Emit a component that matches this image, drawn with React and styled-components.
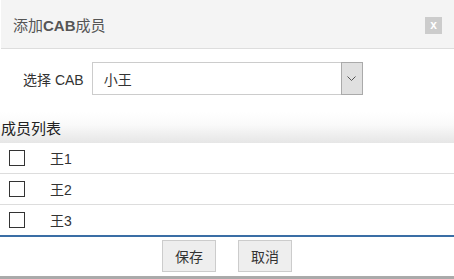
import React, { useState } from 'react';
import styled, { createGlobalStyle } from 'styled-components';

const GlobalStyle = createGlobalStyle`
  html, body {
    margin: 0;
    padding: 0;
    background: #fff;
    font-family: "Liberation Sans", Arial, "Noto Sans CJK SC", sans-serif;
  }
`;

const Dialog = styled.div`
  width: 454px;
  height: 279px;
  box-sizing: border-box;
  border-bottom: 3px solid #aaa;
  background: #fff;
  display: flex;
  flex-direction: column;
`;

const Header = styled.div`
  height: 48px;
  margin-left: 1px;
  background: #f4f4f4;
  border-bottom: 1px solid #ddd;
  display: flex;
  align-items: center;
  justify-content: space-between;
  padding: 0 12px 0 12px;
`;

const Title = styled.div`
  font-size: 15px;
  color: #555;
  b {
    font-weight: bold;
  }
`;

const CloseButton = styled.button`
  width: 17px;
  height: 17px;
  border: none;
  padding: 0;
  background: #ccc;
  color: #fff;
  font-size: 12px;
  line-height: 17px;
  font-family: "Liberation Sans", Arial, sans-serif;
  font-weight: bold;
  margin-top: 3px;
  cursor: pointer;
`;

const FieldRow = styled.div`
  display: flex;
  align-items: center;
  padding: 13px 0 0 23px;
  gap: 8px;
`;

const Label = styled.label`
  font-size: 14px;
  color: #333;
`;

const SelectBox = styled.div`
  width: 271px;
  height: 33px;
  box-sizing: border-box;
  border: 1px solid #ccc;
  display: flex;
  align-items: stretch;
`;

const SelectValue = styled.div`
  flex: 1;
  padding-left: 11px;
  display: flex;
  align-items: center;
  font-size: 14px;
  color: #333;
`;

const SelectArrow = styled.div`
  width: 20px;
  background: #e0e0e0;
  border: 1px solid #aaa;
  margin: -1px -1px -1px 0;
  display: flex;
  align-items: center;
  justify-content: center;
`;

const SectionTitle = styled.div`
  margin-top: 17px;
  height: 31px;
  display: flex;
  align-items: center;
  padding-left: 1px;
  font-size: 15px;
  color: #222;
  background: linear-gradient(to bottom, #ffffff 0%, #fafafa 40%, #e6e6e6 100%);
`;

const List = styled.div`
  display: flex;
  flex-direction: column;
  border-bottom: 2px solid #3a6ea5;
`;

const Row = styled.div`
  height: 30px;
  display: flex;
  align-items: center;
  border-bottom: ${p => (p.last ? 'none' : '1px solid #ddd')};
  padding-left: 9px;
`;

const Check = styled.span`
  width: 16px;
  height: 16px;
  box-sizing: border-box;
  border: 1px solid #333;
  background: ${p => (p.checked ? '#3a6ea5' : '#fff')};
  cursor: pointer;
`;

const Name = styled.span`
  margin-left: 25px;
  font-size: 14px;
  color: #333;
`;

const Footer = styled.div`
  flex: 1;
  display: flex;
  justify-content: center;
  align-items: flex-start;
  padding-top: 3px;
  gap: 22px;
`;

const Button = styled.button`
  width: 54px;
  height: 32px;
  border: 1px solid #ccc;
  background: #eee;
  font-size: 14px;
  color: #333;
  font-family: inherit;
  cursor: pointer;
`;

const members = ['王1', '王2', '王3'];

function App() {
  const [checked, setChecked] = useState({});

  const toggle = (name) => {
    setChecked({ ...checked, [name]: !checked[name] });
  };

  return (
    <>
      <GlobalStyle />
      <Dialog>
        <Header>
          <Title>添加<b>CAB</b>成员</Title>
          <CloseButton>x</CloseButton>
        </Header>
        <FieldRow>
          <Label>选择 CAB</Label>
          <SelectBox>
            <SelectValue>小王</SelectValue>
            <SelectArrow>
              <svg width="9" height="6" viewBox="0 0 9 6">
                <path d="M0.5 0.5 L4.5 4.5 L8.5 0.5" fill="none" stroke="#555" strokeWidth="1" />
              </svg>
            </SelectArrow>
          </SelectBox>
        </FieldRow>
        <SectionTitle>成员列表</SectionTitle>
        <List>
          {members.map((m, i) => (
            <Row key={m} last={i === members.length - 1}>
              <Check checked={checked[m]} onClick={() => toggle(m)} />
              <Name>{m}</Name>
            </Row>
          ))}
        </List>
        <Footer>
          <Button>保存</Button>
          <Button>取消</Button>
        </Footer>
      </Dialog>
    </>
  );
}

export default App;
